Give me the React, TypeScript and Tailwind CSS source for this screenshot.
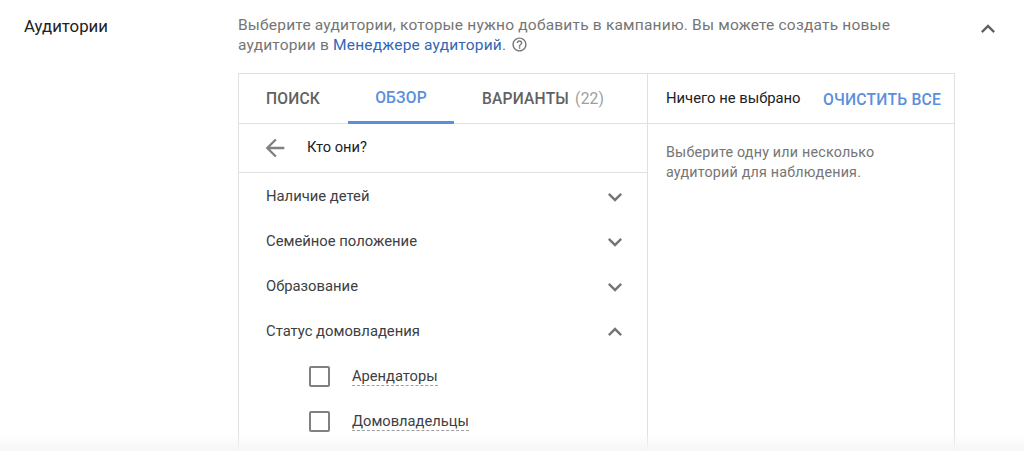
import React from "react";

const Chevron = ({ up = false, className = "" }: { up?: boolean; className?: string }) => (
  <svg width="28" height="28" viewBox="0 0 24 24" className={className} fill="currentColor">
    {up ? (
      <path d="M12 8l-6 6 1.41 1.41L12 10.83l4.59 4.58L18 14z" />
    ) : (
      <path d="M16.59 8.59L12 13.17 7.41 8.59 6 10l6 6 6-6z" />
    )}
  </svg>
);

const Row = ({ label, up = false }: { label: string; up?: boolean }) => (
  <div className="h-[45px] flex items-center justify-between pl-[27px] pr-[18px] text-[14.8px] text-[#3c4043]">
    <span>{label}</span>
    <Chevron up={up} className="text-[#757575]" />
  </div>
);

const Check = ({ label }: { label: string }) => (
  <div className="h-[45px] flex items-center pl-[70px] text-[14.7px] text-[#3c4043]">
    <span className="w-[21px] h-[21px] border-2 border-[#808080] rounded-[2px] mr-[22px] shrink-0" />
    <span className="border-b border-dashed border-[#9e9e9e] leading-[18px]">{label}</span>
  </div>
);

export default function App() {
  return (
    <div className="relative w-[1024px] h-[451px] overflow-hidden bg-white font-['Roboto',sans-serif]">
      <div className="flex pt-[15px]">
        <div className="w-[238px] pl-[24px] text-[16.8px] leading-[22px] text-[#202124]">Аудитории</div>
        <div className="w-[717px]">
          <p className="text-[15.5px] leading-[20px] tracking-[0.2px] text-[#757575] w-[680px]">
            Выберите аудитории, которые нужно добавить в кампанию. Вы можете создать новые аудитории в{" "}
            <span className="text-[#3367b5]">Менеджере аудиторий</span>.{" "}
            <svg width="17" height="17" viewBox="0 0 24 24" fill="#757575" className="inline align-[-3px] ml-[1px]">
              <path d="M11 18h2v-2h-2v2zm1-16C6.48 2 2 6.48 2 12s4.48 10 10 10 10-4.48 10-10S17.52 2 12 2zm0 18c-4.41 0-8-3.59-8-8s3.59-8 8-8 8 3.59 8 8-3.59 8-8 8zm0-14c-2.21 0-4 1.79-4 4h2c0-1.1.9-2 2-2s2 .9 2 2c0 2-3 1.75-3 5h2c0-2.25 3-2.5 3-5 0-2.21-1.79-4-4-4z" />
            </svg>
          </p>
          <div className="mt-[18px] h-[400px] border border-[#e0e0e0] flex">
            <div className="w-[409px] border-r border-[#e0e0e0]">
              <div className="h-[50px] border-b border-[#e0e0e0] flex text-[15.6px] font-medium text-[#616161] tracking-[0.2px]">
                <div className="w-[109px] pl-[27px] pt-[2px] flex items-center">ПОИСК</div>
                <div className="w-[106px] flex items-center justify-center text-[#5a8fdc] border-b-[3px] border-[#5a8fdc] pt-[3px] -mb-px">ОБЗОР</div>
                <div className="pl-[28px] pt-[2px] flex items-center">
                  ВАРИАНТЫ<span className="ml-[6px] font-normal text-[#9e9e9e]">(22)</span>
                </div>
              </div>
              <div className="h-[49px] border-b border-[#e0e0e0] flex items-center pl-[22px] text-[14.7px] text-[#202124]">
                <svg width="28" height="28" viewBox="0 0 24 24" fill="#808080" className="mr-[18px]">
                  <path d="M20 11H7.83l5.59-5.59L12 4l-8 8 8 8 1.41-1.41L7.83 13H20v-2z" />
                </svg>
                <span className="-mt-[1px]">Кто они?</span>
              </div>
              <div className="pt-[1px]">
                <Row label="Наличие детей" />
                <Row label="Семейное положение" />
                <Row label="Образование" />
                <Row label="Статус домовладения" up />
                <Check label="Арендаторы" />
                <Check label="Домовладельцы" />
              </div>
            </div>
            <div className="flex-1">
              <div className="h-[50px] border-b border-[#e0e0e0] flex items-center justify-between pl-[18px] pr-[13px]">
                <span className="text-[14.8px] text-[#202124]">Ничего не выбрано</span>
                <span className="text-[15.7px] font-medium tracking-[0.2px] text-[#5a8fdc] pt-[2px]">ОЧИСТИТЬ ВСЕ</span>
              </div>
              <p className="pt-[18px] pl-[18px] text-[14.3px] leading-[20px] tracking-[0.2px] text-[#757575]">
                Выберите одну или несколько
                <br />
                аудиторий для наблюдения.
              </p>
            </div>
          </div>
        </div>
        <Chevron up className="text-[#5f6368] ml-[19px]" />
      </div>
      <div className="absolute left-0 right-0 bottom-0 h-[18px] bg-gradient-to-b from-transparent to-[#f6f6f6]" />
    </div>
  );
}
